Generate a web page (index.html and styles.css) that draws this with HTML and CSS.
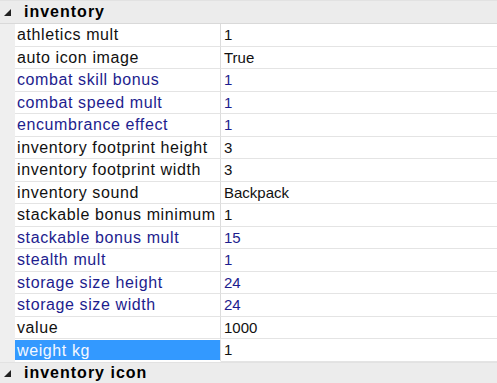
FILE: index.html
```html
<!DOCTYPE html>
<html lang="en">
<head>
  <meta charset="UTF-8" />
  <title>Properties - inventory</title>
  <link rel="stylesheet" href="styles.css">
</head>
<body>

  <div class="grid">
    <div class="category">
      <svg class="toggle" width="8" height="8" viewBox="0 0 8 8"><polygon points="7,0 7,7 0,7" /></svg>
      <span>inventory</span>
    </div>

    <div class="row"><div class="gutter"></div><div class="name">athletics mult</div><div class="value">1</div></div>
    <div class="row"><div class="gutter"></div><div class="name">auto icon image</div><div class="value">True</div></div>
    <div class="row changed"><div class="gutter"></div><div class="name">combat skill bonus</div><div class="value">1</div></div>
    <div class="row changed"><div class="gutter"></div><div class="name">combat speed mult</div><div class="value">1</div></div>
    <div class="row changed"><div class="gutter"></div><div class="name">encumbrance effect</div><div class="value">1</div></div>
    <div class="row"><div class="gutter"></div><div class="name">inventory footprint height</div><div class="value">3</div></div>
    <div class="row"><div class="gutter"></div><div class="name">inventory footprint width</div><div class="value">3</div></div>
    <div class="row"><div class="gutter"></div><div class="name">inventory sound</div><div class="value">Backpack</div></div>
    <div class="row"><div class="gutter"></div><div class="name">stackable bonus minimum</div><div class="value">1</div></div>
    <div class="row changed"><div class="gutter"></div><div class="name">stackable bonus mult</div><div class="value">15</div></div>
    <div class="row changed"><div class="gutter"></div><div class="name">stealth mult</div><div class="value">1</div></div>
    <div class="row changed"><div class="gutter"></div><div class="name">storage size height</div><div class="value">24</div></div>
    <div class="row changed"><div class="gutter"></div><div class="name">storage size width</div><div class="value">24</div></div>
    <div class="row"><div class="gutter"></div><div class="name">value</div><div class="value">1000</div></div>
    <div class="row selected"><div class="gutter"></div><div class="name">weight kg</div><div class="value">1</div></div>

    <div class="category last">
      <svg class="toggle" width="8" height="8" viewBox="0 0 8 8"><polygon points="7,0 7,7 0,7" /></svg>
      <span>inventory icon</span>
    </div>
  </div>

</body>
</html>
```

FILE: styles.css
```css
* { margin: 0; padding: 0; box-sizing: border-box; }

body {
  background: #ffffff;
  font-family: "Liberation Sans", Arial, sans-serif;
  width: 497px;
  height: 383px;
  overflow: hidden;
}

.grid {
  display: flex;
  flex-direction: column;
}

.category {
  height: 24px;
  display: flex;
  align-items: center;
  gap: 12px;
  padding-left: 4px;
  background: #ececec;
  border-top: 1px solid #e2e2e2;
  border-bottom: 1px solid #d9d9d9;
  font-weight: bold;
  font-size: 16px;
  letter-spacing: 1px;
  color: #000;
}

.category.last {
  border-bottom: none;
  height: 22px;
}

.toggle {
  fill: #222;
  margin-top: 1px;
}

.row {
  display: grid;
  grid-template-columns: 15px 206px 1fr;
  height: 22.5px;
}

.gutter {
  background: #efefef;
}

.name {
  padding-left: 2px;
  font-size: 16px;
  letter-spacing: 0.6px;
  line-height: 21px;
  color: #111;
  border-bottom: 1px solid #e4e4e4;
  border-right: 1px solid #dcdcdc;
  white-space: nowrap;
  overflow: hidden;
}

.value {
  padding-left: 3px;
  font-size: 15px;
  line-height: 21px;
  color: #111;
  border-bottom: 1px solid #e4e4e4;
}

.row.changed .name,
.row.changed .value {
  color: #1d1d8e;
}

.row.selected .name {
  background: #3399ff;
  color: #f4f8ff;
  border-top: 1px solid #ffffff;
  border-bottom: 2px solid #ffffff;
}
```
